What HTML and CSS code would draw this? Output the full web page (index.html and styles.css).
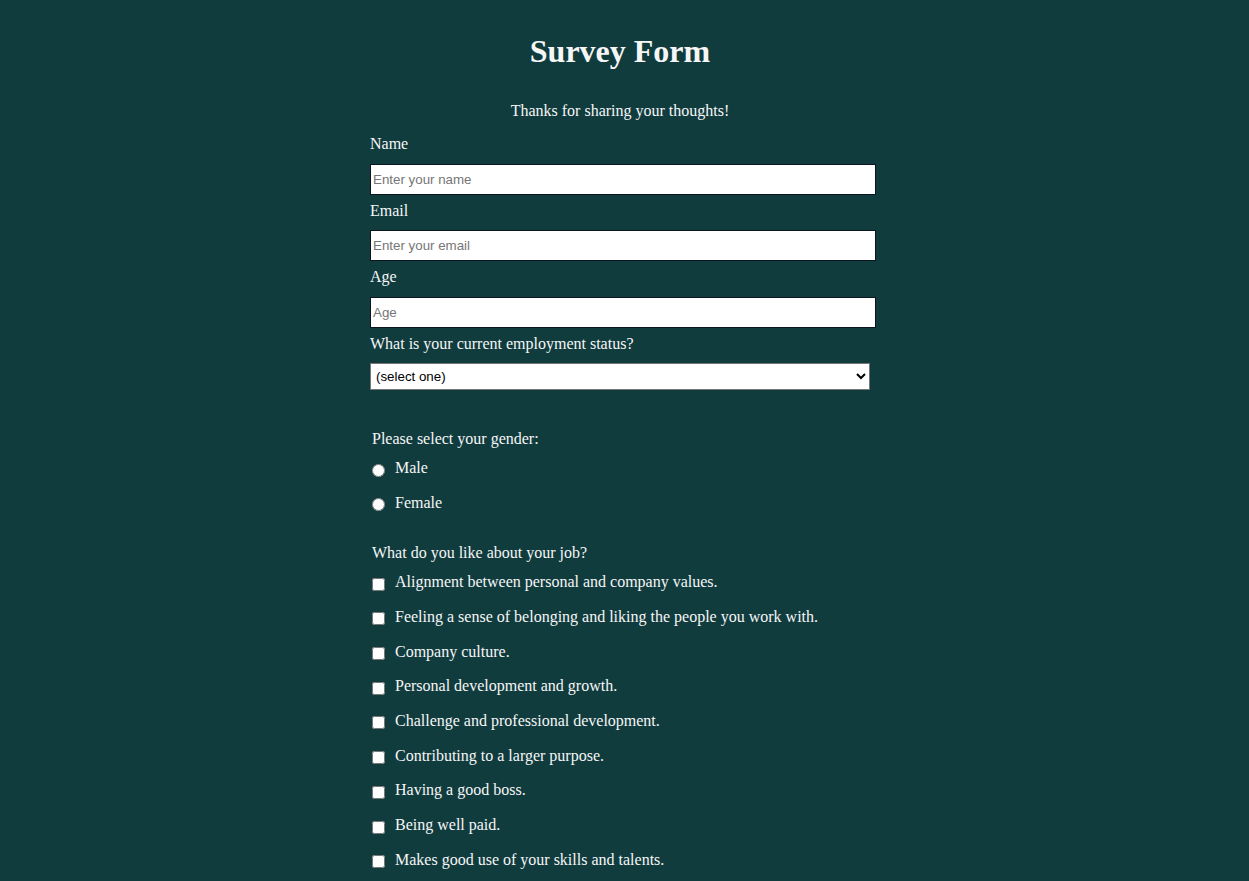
FILE: index.html
```html
<!DOCTYPE html>
<html lang="en">
<head>
<meta charset="utf-8">
<title>Survey Form</title>
<link rel="stylesheet" href="styles.css">
</head>
<body>
<div class="page">
  <main class="survey">
    <h1 id="title" class="title">Survey Form</h1>
    <p id="description" class="description">Thanks for sharing your thoughts!</p>
    <form id="survey-form" class="form">
      <label class="field-label" for="name" id="name-label">Name</label>
      <input class="text-input" type="text" id="name" placeholder="Enter your name" required>

      <label class="field-label" for="email" id="email-label">Email</label>
      <input class="text-input" type="email" id="email" placeholder="Enter your email" required>

      <label class="field-label" for="number" id="number-label">Age</label>
      <input class="text-input" type="number" id="number" min="10" max="99" placeholder="Age">

      <label class="field-label" for="dropdown">What is your current employment status?</label>
      <select class="select" id="dropdown">
        <option>(select one)</option>
        <option>Employed full-time</option>
        <option>Employed part-time</option>
        <option>Self-employed</option>
        <option>Unemployed</option>
        <option>Student</option>
      </select>

      <div class="group gender">
        <p class="group-title">Please select your gender:</p>
        <label class="choice"><input class="control" type="radio" name="gender" value="male"><span>Male</span></label>
        <label class="choice"><input class="control" type="radio" name="gender" value="female"><span>Female</span></label>
      </div>

      <div class="group likes">
        <p class="group-title">What do you like about your job?</p>
        <label class="choice"><input class="control" type="checkbox" value="values"><span>Alignment between personal and company values.</span></label>
        <label class="choice"><input class="control" type="checkbox" value="belonging"><span>Feeling a sense of belonging and liking the people you work with.</span></label>
        <label class="choice"><input class="control" type="checkbox" value="culture"><span>Company culture.</span></label>
        <label class="choice"><input class="control" type="checkbox" value="growth"><span>Personal development and growth.</span></label>
        <label class="choice"><input class="control" type="checkbox" value="challenge"><span>Challenge and professional development.</span></label>
        <label class="choice"><input class="control" type="checkbox" value="purpose"><span>Contributing to a larger purpose.</span></label>
        <label class="choice"><input class="control" type="checkbox" value="boss"><span>Having a good boss.</span></label>
        <label class="choice"><input class="control" type="checkbox" value="paid"><span>Being well paid.</span></label>
        <label class="choice"><input class="control" type="checkbox" value="skills"><span>Makes good use of your skills and talents.</span></label>
      </div>
    </form>
  </main>
</div>
</body>
</html>
```

FILE: styles.css
```css
html, body {
  margin: 0;
  padding: 0;
  background: #103c3e;
}

body {
  font-family: "Liberation Serif", "Times New Roman", serif;
  font-size: 16px;
  color: #f6f6f6;
}

.page {
  width: 1240px;
  padding-bottom: 8px;
}

.survey {
  width: 500px;
  margin: 0 auto;
  padding-top: 33px;
}

.title {
  margin: 0;
  font-size: 32px;
  font-weight: bold;
  text-align: center;
  line-height: 37px;
}

.description {
  margin: 32px 0 0;
  text-align: center;
  line-height: 18px;
}

.form {
  display: flex;
  flex-direction: column;
  align-items: flex-start;
  padding-top: 15px;
}

.field-label {
  display: block;
  line-height: 18px;
  margin-bottom: 10.5px;
}

.text-input {
  box-sizing: border-box;
  width: 506px;
  height: 31px;
  margin: 0 0 7px;
  padding: 0 2px;
  border: 1px solid #0b1420;
  background: #fff;
  font-family: "Liberation Sans", Arial, sans-serif;
  font-size: 13.333px;
  color: #222;
}

.text-input::placeholder {
  color: #767676;
}

.select {
  box-sizing: border-box;
  width: 500px;
  height: 27px;
  margin: 0;
  padding: 0 1px;
  border: 1px solid #767676;
  border-radius: 0;
  background: #fff;
  font-family: "Liberation Sans", Arial, sans-serif;
  font-size: 13.333px;
  color: #000;
}

.group {
  display: flex;
  flex-direction: column;
  padding-left: 2px;
}

.gender {
  margin-top: 39.5px;
  gap: 16.5px;
}

.likes {
  margin-top: 32px;
  gap: 16.7px;
}

.group-title {
  margin: 0 0 -5px;
  line-height: 18px;
}

.choice {
  display: flex;
  align-items: flex-start;
  gap: 10px;
  line-height: 18px;
}

.control {
  width: 13px;
  height: 13px;
  margin: 4.5px 0 0;
  flex: none;
}
```
